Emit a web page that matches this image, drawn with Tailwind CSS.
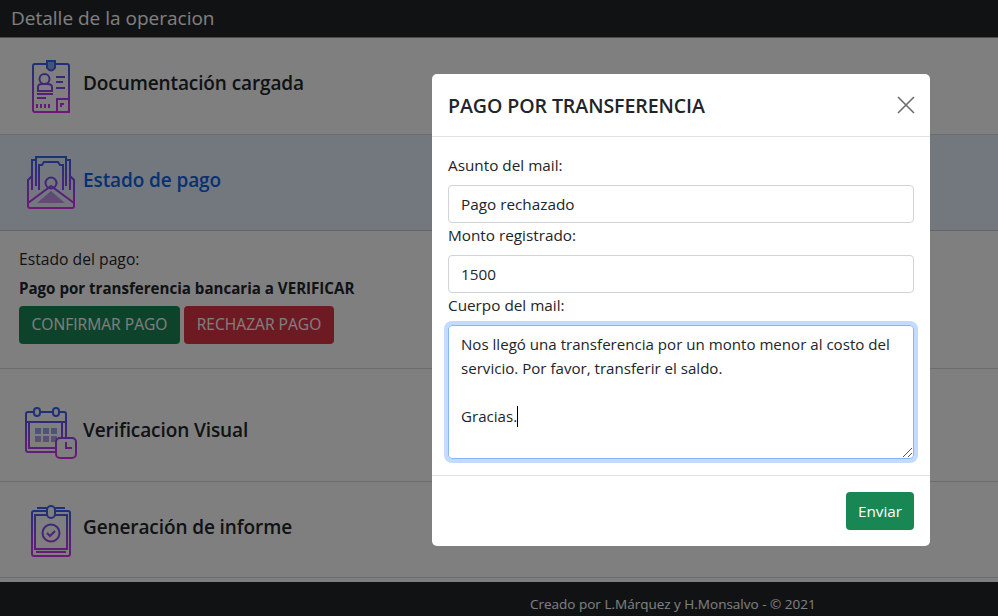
<!doctype html>
<html lang="es"><head><meta charset="utf-8"><script src="https://cdn.jsdelivr.net/npm/@tailwindcss/browser@4"></script><title>Detalle</title></head>
<body class="h-[616px] w-[998px] overflow-hidden bg-white font-['Open_Sans','Noto_Sans',sans-serif] text-[15px] text-[#212529]">
<svg width="0" height="0" class="absolute"><defs>
<linearGradient id="g" gradientUnits="userSpaceOnUse" x1="0" y1="0" x2="0" y2="52"><stop offset="0" stop-color="#2f66f0"/><stop offset="1" stop-color="#e030f0"/></linearGradient>
<linearGradient id="gf" gradientUnits="userSpaceOnUse" x1="0" y1="15" x2="0" y2="50"><stop offset="0" stop-color="#5a90f0" stop-opacity=".75"/><stop offset="1" stop-color="#d070e0" stop-opacity=".75"/></linearGradient>
</defs></svg>
<div class="flex h-full flex-col">
<header class="flex h-[38px] shrink-0 items-center border-b border-[#999] bg-[#212529] pl-[11px] text-[19px] text-white">Detalle de la operacion</header>
<section class="relative flex h-[97px] shrink-0 items-center border-b border-black/15 pb-[5px] pl-[83px]">
<svg class="absolute left-[32px] top-[22px]" width="38" height="53" viewBox="0 0 38 53" fill="none" stroke="url(#g)" stroke-width="2"><path d="M15 4H3Q1 4 1 6V50Q1 52 3 52H35Q37 52 37 50V6Q37 4 35 4H23"/><path d="M15 1H23V8Q19 13 15 8Z" fill="url(#gf)"/><circle cx="12.500" cy="19" r="5"/><path d="M6 31V27Q6 24 10 24H15Q20 24 20 27V31Z"/><path d="M24 17H33M24 22H31M24 28H33M5 34H21M5 38H14M5 44V48M9 44V48M13 44V48M17 44V48"/><path d="M25 39H37V52H25Z"/><path d="M29 47V44H32"/></svg>
<h3 class="text-[19px] font-semibold tracking-[-0.1px]">Documentación cargada</h3></section>
<section class="relative flex h-[96px] shrink-0 items-center border-b border-black/15 bg-[#e7f1ff] pb-[4px] pl-[83px]">
<svg class="absolute left-[27px] top-[21px]" width="48" height="53" viewBox="0 0 48 53" fill="none" stroke="url(#g)" stroke-width="2"><path d="M5 34V4H9M43 34V4H39"/><path d="M9 4V1H39V4M9 4V30M39 4V30"/><path d="M12 34V9H15L17 6H31L33 9H36V34"/><circle cx="24" cy="27" r="5.500"/><path d="M5 20L1 24V50Q1 52 3 52H45Q47 52 47 50V24L43 20"/><path d="M1 47L24 30L47 47"/><path d="M10 47L24 35L38 47Z" fill="url(#gf)" stroke="none"/></svg>
<h3 class="text-[19px] font-semibold tracking-[-0.1px] text-[#0c63e4]">Estado de pago</h3></section>
<section class="h-[138px] shrink-0 border-b border-black/15 px-[19px] pt-[17px]">
<p class="mb-[7px] text-[15.7px] leading-[22px]">Estado del pago:</p>
<p class="mb-[7px] whitespace-nowrap text-[15.1px] font-bold leading-[22px]">Pago por transferencia bancaria a VERIFICAR</p>
<div class="flex gap-[4px]">
<button class="h-[38px] w-[161px] rounded-[4px] bg-[#198754] text-[15.6px] text-white">CONFIRMAR PAGO</button>
<button class="h-[38px] w-[150px] rounded-[4px] bg-[#dc3545] text-[15.6px] text-white">RECHAZAR PAGO</button></div>
</section>
<section class="relative flex h-[113px] shrink-0 items-center border-b border-black/15 pl-[83px] pt-[10px]">
<svg class="absolute left-[25px] top-[38px]" width="52" height="52" viewBox="0 0 52 52" fill="none" stroke="url(#g)" stroke-width="2"><path d="M31 45H3Q1 45 1 43V7Q1 5 3 5H9M15 5H28M34 5H39Q41 5 41 7V30"/><rect x="9" y="1" width="6" height="8" rx="3"/><rect x="28" y="1" width="6" height="8" rx="3"/><path d="M1 15H41M4 15V41H31M37 15V30"/><g fill="url(#gf)" stroke="none"><rect x="10" y="21" width="6" height="6"/><rect x="18" y="21" width="6" height="6"/><rect x="26" y="21" width="6" height="6"/><rect x="10" y="29" width="6" height="6"/><rect x="18" y="29" width="6" height="6"/><rect x="26" y="29" width="6" height="6"/></g><rect x="31" y="31" width="20" height="20" rx="4"/><path d="M41 35V41H47"/></svg>
<h3 class="text-[19px] font-semibold tracking-[-0.1px]">Verificacion Visual</h3></section>
<section class="relative flex h-[96px] shrink-0 items-center border-b border-black/15 pb-[4px] pl-[83px]">
<svg class="absolute left-[31px] top-[23px]" width="40" height="52" viewBox="0 0 40 52" fill="none" stroke="url(#g)" stroke-width="2"><path d="M16 6H3Q1 6 1 8V49Q1 51 3 51H37Q39 51 39 49V8Q39 6 37 6H24"/><path d="M6 3H16M24 3H34"/><rect x="16" y="1" width="8" height="12" rx="4"/><path d="M16 10H4V44H36V10H24"/><path d="M5 47H35"/><circle cx="20" cy="28" r="8.500"/><path d="M16 28L19 31L24 26"/></svg>
<h3 class="text-[19px] font-semibold tracking-[-0.1px]">Generación de informe</h3></section>
<div class="h-[4px] shrink-0"></div>
<footer class="grow bg-[#212529] pl-[530px] pt-[12px] text-[13.5px] text-white">Creado por L.Márquez y H.Monsalvo - © 2021</footer>
</div>
<div class="fixed inset-0 bg-black/50"></div>
<div class="fixed left-[432px] top-[74px] h-[472px] w-[498px] rounded-[5px] bg-white">
<div class="flex h-[63px] items-center justify-between border-b border-[#dee2e6] pl-[16px] pr-[15px]">
<h5 class="pt-[1px] text-[19.6px] font-semibold tracking-[-0.1px]">PAGO POR TRANSFERENCIA</h5>
<svg width="18" height="18" viewBox="0 0 18 18" stroke="#6b6b6b" stroke-width="1.6"><path d="M1 1L17 17M17 1L1 17"/></svg></div>
<div class="flex h-[339px] flex-col border-b border-[#dee2e6] px-[16px] pt-[16px] text-[#212529]">
<label class="block h-[32px] text-[15.3px] leading-[25px]">Asunto del mail:</label>
<div class="flex h-[38px] shrink-0 items-center rounded-[4px] border border-[#ced4da] pl-[12px] pt-[1px] text-[15.3px]">Pago rechazado</div>
<label class="block h-[32px] text-[15.3px] leading-[24px]">Monto registrado:</label>
<div class="flex h-[38px] shrink-0 items-center rounded-[4px] border border-[#ced4da] pl-[12px] pt-[1px] text-[15.3px]">1500</div>
<label class="block h-[32px] text-[15.3px] leading-[24px]">Cuerpo del mail:</label>
<div class="relative h-[134px] shrink-0 rounded-[4px] border border-[#86b7fe] px-[12px] pt-[6px] text-[15.1px] leading-[24px] shadow-[0_0_0_4px_#c2dbfe]">
<p class="whitespace-nowrap">Nos llegó una transferencia por un monto menor al costo del</p><p>servicio. Por favor, transferir el saldo.</p><p class="h-[24px]"></p><p class="flex items-center">Gracias.<span class="h-[21px] w-px bg-black"></span></p>
<svg class="absolute bottom-[1px] right-[1px]" width="9" height="9" viewBox="0 0 9 9" stroke="#555" stroke-width="1"><path d="M0 9L9 0M5 9L9 5"/></svg></div>
</div>
<div class="flex justify-end px-[16px] pt-[16px]"><button class="h-[38px] w-[68px] rounded-[4px] bg-[#198754] pt-[1px] text-[15.3px] text-white">Enviar</button></div>
</div>
</body></html>
